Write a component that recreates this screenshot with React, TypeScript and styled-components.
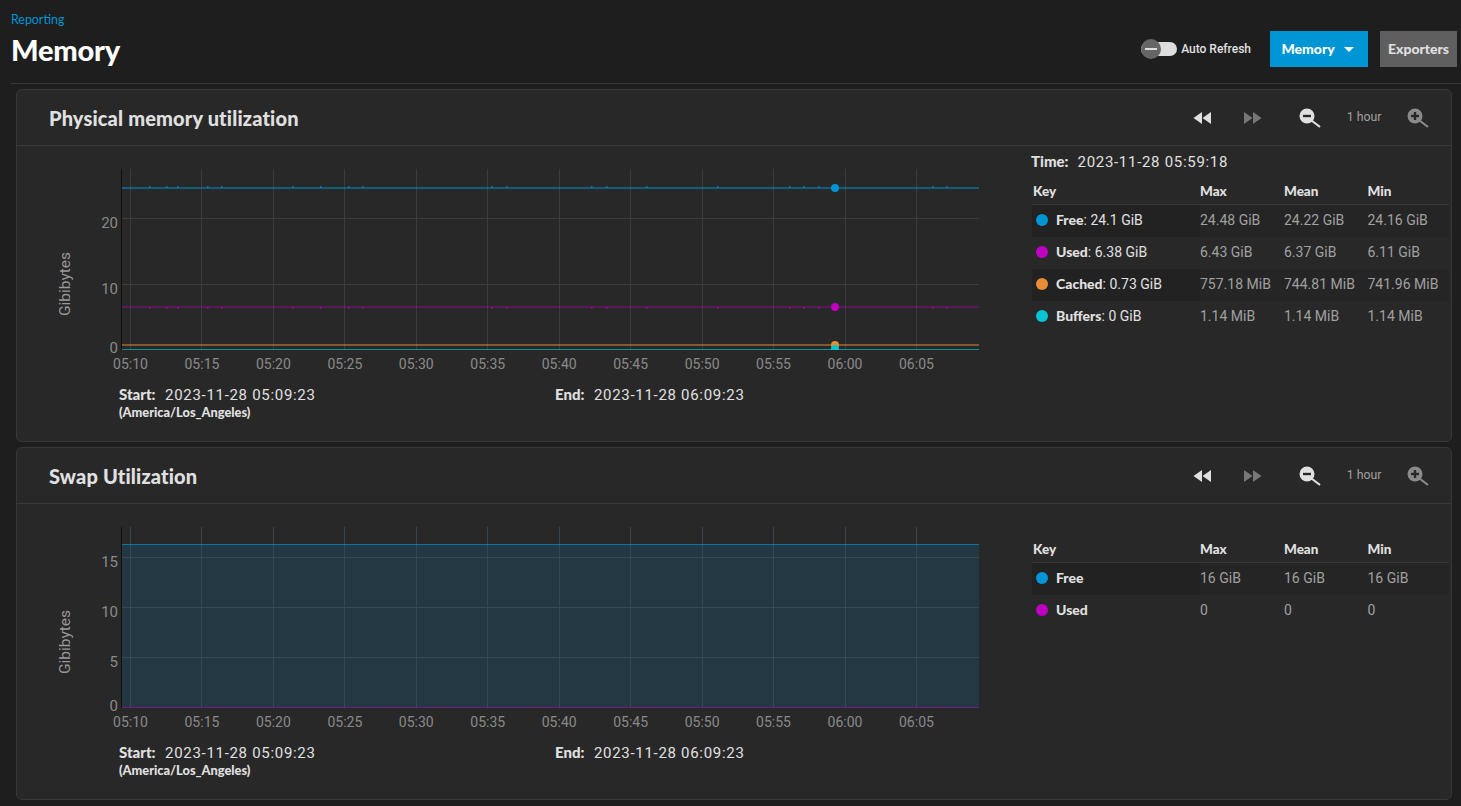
import React from 'react';
import styled, { createGlobalStyle } from 'styled-components';

const Color = {
  PAGE: '#1e1e1e',
  CARD: '#282828',
  LINE: '#383838',
  TEXT: '#e0e0e0',
  MUTED: '#a0a0a0',
  BLUE: '#0095d5',
  PURPLE: '#c000c0',
  ORANGE: '#e68d36',
  CYAN: '#07c4d2',
};

const HEAD = `Lato, "Noto Sans", sans-serif`;
const BODY = `Roboto, "Liberation Sans", sans-serif`;

const GlobalStyle = createGlobalStyle`
  html, body { margin: 0; padding: 0; background: ${Color.PAGE}; }
  body { width: 1461px; height: 806px; overflow: hidden; font-family: ${BODY}; color: ${Color.TEXT}; }
`;

const Page = styled.div`
  padding: 0 4px 0 11px;
`;

const PageHeader = styled.header`
  height: 83px;
  border-bottom: 1px solid #353535;
  display: flex;
  justify-content: space-between;
  align-items: flex-start;
  margin-right: -4px;
`;

const TitleBlock = styled.div`
  padding-top: 13px;
`;

const Crumb = styled.div`
  font: 400 12.4px/14px ${HEAD};
  color: ${Color.BLUE};
`;

const Title = styled.h1`
  margin: 5px 0 0;
  font: 900 29px/36px ${HEAD};
  color: #fff;
  letter-spacing: -0.2px;
`;

const Actions = styled.div`
  display: flex;
  align-items: center;
  padding-top: 31px;
  margin-right: 4px;
`;

const Toggle = styled.div`
  position: relative;
  width: 36px;
  height: 14px;
  border-radius: 7px;
  background: #dddddd;
  margin-right: 4px;
`;

const Thumb = styled.span`
  position: absolute;
  left: 0;
  top: -3px;
  width: 20px;
  height: 20px;
  border-radius: 50%;
  background: #666;
  display: flex;
  align-items: center;
  justify-content: center;
  &::after {
    content: '';
    width: 12px;
    height: 2px;
    background: #ddd;
  }
`;

const ToggleLabel = styled.span`
  font: 500 12px/14px ${BODY};
  color: ${Color.TEXT};
  margin-right: 19px;
`;

const HeadButton = styled.div<{ $primary?: boolean }>`
  height: 36px;
  padding: 0 8px;
  display: flex;
  align-items: center;
  justify-content: center;
  width: ${(p) => (p.$primary ? 98 : 77)}px;
  box-sizing: border-box;
  margin-left: ${(p) => (p.$primary ? 0 : 12)}px;
  background: ${(p) => (p.$primary ? Color.BLUE : '#5f5f5f')};
  color: ${(p) => (p.$primary ? '#fff' : Color.TEXT)};
  font: 900 14px/16px ${HEAD};
`;

const Caret = styled.span`
  width: 0;
  height: 0;
  margin: 0 3px 0 9px;
  border-left: 5.5px solid transparent;
  border-right: 5.5px solid transparent;
  border-top: 5.5px solid #fff;
`;

const Cards = styled.div`
  display: flex;
  flex-direction: column;
  gap: 5px;
  padding: 5px 5px 0 5px;
`;

const Card = styled.section`
  height: 351px;
  background: ${Color.CARD};
  border: 1px solid ${Color.LINE};
  border-radius: 6px;
`;

const CardHead = styled.div`
  height: 55px;
  border-bottom: 1px solid ${Color.LINE};
  display: flex;
  align-items: center;
  padding: 0 21px 0 32px;
`;

const CardTitle = styled.h2`
  flex: 1;
  margin: 0;
  font: 900 20px/24px ${HEAD};
  letter-spacing: 0.15px;
  color: ${Color.TEXT};
`;

const Tools = styled.div`
  display: flex;
  align-items: center;
`;

const ToolIcon = styled.svg<{ $gap?: number }>`
  width: 24px;
  height: 24px;
  display: block;
  flex: none;
  margin-left: ${(p) => p.$gap ?? 0}px;
`;

const Hour = styled.span`
  font: 400 12.3px/14px ${BODY};
  color: ${Color.MUTED};
  margin: 0 24.5px 2px 25px;
`;

const CardBody = styled.div`
  display: flex;
  height: 295px;
`;

const ChartCol = styled.div`
  width: 1014px;
  flex: none;
`;

const ChartSvg = styled.svg`
  display: block;
  width: 1014px;
  height: 233px;
  font-family: ${BODY};
`;

const Stamps = styled.div`
  display: flex;
  padding-left: 102px;
  margin-top: 7px;
`;

const Stamp = styled.div<{ $wide?: boolean }>`
  width: ${(p) => (p.$wide ? 436 : 300)}px;
  font: 400 15px/16px ${BODY};
  color: ${Color.TEXT};
  letter-spacing: 0.7px;
  b {
    font: 900 15px/16px ${HEAD};
    letter-spacing: 0;
    margin-right: 9.5px;
  }
`;

const Zone = styled.div`
  margin-top: 2px;
  font: 900 12.8px/14px ${HEAD};
  color: ${Color.TEXT};
  letter-spacing: 0;
`;

const LegendCol = styled.div`
  flex: 1;
  padding: 0 2px 0 1px;
`;

const TimeRow = styled.div<{ $hidden?: boolean }>`
  height: 31px;
  padding-top: 7px;
  margin-left: -1px;
  box-sizing: border-box;
  visibility: ${(p) => (p.$hidden ? 'hidden' : 'visible')};
  font: 400 15px/16px ${BODY};
  letter-spacing: 0.7px;
  b {
    font: 900 15px/16px ${HEAD};
    letter-spacing: 0;
    margin-right: 9px;
  }
`;

const LegendGrid = styled.div`
  display: grid;
  grid-template-columns: 168px 84px 83.5px 1fr;
`;

const HeadCell = styled.div`
  height: 27px;
  border-bottom: 1px solid ${Color.LINE};
  font: 900 13.5px/29px ${HEAD};
  color: ${Color.TEXT};
`;

const KeyHead = styled(HeadCell)`
  padding-left: 1px;
`;

const Cell = styled.div<{ $shade?: boolean }>`
  height: 32px;
  box-sizing: border-box;
  padding-bottom: 2px;
  display: flex;
  align-items: center;
  background: ${(p) => (p.$shade ? '#252525' : 'transparent')};
  font: 400 14px/16px ${BODY};
  color: ${Color.MUTED};
  white-space: nowrap;
`;

const KeyCell = styled(Cell)`
  padding-left: 4px;
  background: ${(p) => (p.$shade ? '#222222' : 'transparent')};
  color: ${Color.TEXT};
  b {
    font: 900 14px/16px ${HEAD};
  }
`;

const Dot = styled.span<{ $color: string }>`
  width: 12px;
  height: 12px;
  border-radius: 50%;
  background: ${(p) => p.$color};
  margin-right: 8px;
`;

const RewindIcon = ({ dim }: { dim?: boolean }) => (
  <ToolIcon viewBox="0 0 24 24" fill={dim ? '#777' : '#e0e0e0'}>
    <path d="M11 18V6l-8.5 6 8.5 6zm.5-6l8.5 6V6l-8.5 6z" />
  </ToolIcon>
);

const ForwardIcon = ({ dim, gap }: { dim?: boolean; gap?: number }) => (
  <ToolIcon viewBox="0 0 24 24" fill={dim ? '#777' : '#e0e0e0'} $gap={gap}>
    <path d="M4 18l8.5-6L4 6v12zm9-12v12l8.5-6L13 6z" />
  </ToolIcon>
);

const ZoomIcon = ({ plus, color, gap }: { plus?: boolean; color: string; gap?: number }) => (
  <ToolIcon viewBox="0 0 24 24" $gap={gap}>
    <circle cx="9" cy="10" r="7.5" fill={color} />
    <path d="M13.5 14.5L22 21" stroke={color} strokeWidth="2.2" />
    <path d="M5 10h8" stroke={Color.CARD} strokeWidth="2.4" />
    {plus && <path d="M9 6v8" stroke={Color.CARD} strokeWidth="2.4" />}
  </ToolIcon>
);

type Series = { color: string; y: number; w?: number; opacity?: number };

const xGrid = Array.from({ length: 12 }, (_, i) => 113.5 + i * 71.45);
const xLabels = ['05:10', '05:15', '05:20', '05:25', '05:30', '05:35', '05:40', '05:45', '05:50', '05:55', '06:00', '06:05'];
const bumps = [28, 45, 56, 86, 100, 171, 199, 227, 241, 370, 385, 470, 485, 525, 596, 668, 682, 697, 811, 825];

type ChartProps = {
  ticks: { label: string; y: number }[];
  bottom: number;
  series: Series[];
  dots?: { color: string; y: number }[];
  area?: number;
  wobble?: boolean;
};

// coordinates are relative to the card body: plot runs x 104..962
const Chart = ({ ticks, bottom, series, dots, area, wobble }: ChartProps) => {
  const grid = area !== undefined ? '#344955' : '#3c3c3c';
  return (
    <ChartSvg viewBox="0 0 1014 233">
      <defs>
        <clipPath id="plot-clip">
          <rect x={104} y={23} width={858} height={bottom - 23} />
        </clipPath>
      </defs>
      {area !== undefined && <rect x={104} y={area} width={858} height={bottom - area} fill="#243843" />}
      {xGrid.map((x) => (
        <line key={x} x1={Math.floor(x) + 0.5} x2={Math.floor(x) + 0.5} y1={23} y2={bottom} stroke={grid} />
      ))}
      {ticks.map((t) => (
        <g key={t.label}>
          {t.label !== '0' && <line x1={104} x2={962} y1={t.y + 0.5} y2={t.y + 0.5} stroke={grid} />}
          <text x={101} y={t.y + 10} textAnchor="end" fontSize="15" fill="#8a8a8a">
            {t.label}
          </text>
        </g>
      ))}
      {series.map((s) => (
        <g key={s.color}>
          <line x1={104} x2={962} y1={s.y} y2={s.y} stroke={s.color} strokeWidth={s.w ?? 1} opacity={s.opacity ?? 0.65} />
          {wobble &&
            s.y < 170 &&
            bumps.map((b) => (
              <rect key={b} x={104 + b} y={s.y < 60 ? s.y - 2 : s.y} width={1.5} height={2} fill={s.color} opacity={0.65} />
            ))}
        </g>
      ))}
      <line x1={104.5} x2={104.5} y1={23} y2={bottom} stroke="#111" />
      <g clipPath="url(#plot-clip)">
        {dots?.map((d) => <circle key={d.color} cx={818} cy={d.y} r={4} fill={d.color} />)}
      </g>
      {xLabels.map((l, i) => (
        <text key={l} x={xGrid[i]} y={bottom + 19} textAnchor="middle" fontSize="14" fill="#8a8a8a">
          {l}
        </text>
      ))}
      <text transform={`translate(53 ${bottom - 66}) rotate(-90)`} textAnchor="middle" fontSize="15.5" fill="#999">
        Gibibytes
      </text>
    </ChartSvg>
  );
};

type Row = { name: string; now?: string; color: string; max: string; mean: string; min: string };

const memoryRows: Row[] = [
  { name: 'Free', now: '24.1 GiB', color: Color.BLUE, max: '24.48 GiB', mean: '24.22 GiB', min: '24.16 GiB' },
  { name: 'Used', now: '6.38 GiB', color: Color.PURPLE, max: '6.43 GiB', mean: '6.37 GiB', min: '6.11 GiB' },
  { name: 'Cached', now: '0.73 GiB', color: Color.ORANGE, max: '757.18 MiB', mean: '744.81 MiB', min: '741.96 MiB' },
  { name: 'Buffers', now: '0 GiB', color: Color.CYAN, max: '1.14 MiB', mean: '1.14 MiB', min: '1.14 MiB' },
];

const swapRows: Row[] = [
  { name: 'Free', color: Color.BLUE, max: '16 GiB', mean: '16 GiB', min: '16 GiB' },
  { name: 'Used', color: Color.PURPLE, max: '0', mean: '0', min: '0' },
];

const Legend = ({ rows, time }: { rows: Row[]; time?: string }) => (
  <LegendCol>
    <TimeRow $hidden={!time}>
      <b>Time:</b>
      {time ?? '-'}
    </TimeRow>
    <LegendGrid>
      <KeyHead>Key</KeyHead>
      <HeadCell>Max</HeadCell>
      <HeadCell>Mean</HeadCell>
      <HeadCell>Min</HeadCell>
      {rows.map((r, i) => (
        <React.Fragment key={r.name}>
          <KeyCell $shade={i % 2 === 0}>
            <Dot $color={r.color} />
            <b>{r.name}</b>
            {r.now && <>: {r.now}</>}
          </KeyCell>
          <Cell $shade={i % 2 === 0}>{r.max}</Cell>
          <Cell $shade={i % 2 === 0}>{r.mean}</Cell>
          <Cell $shade={i % 2 === 0}>{r.min}</Cell>
        </React.Fragment>
      ))}
    </LegendGrid>
  </LegendCol>
);

const ReportCard = ({ title, children }: { title: string; children: React.ReactNode }) => (
  <Card>
    <CardHead>
      <CardTitle>{title}</CardTitle>
      <Tools>
        <RewindIcon />
        <ForwardIcon dim gap={25.5} />
        <ZoomIcon color="#e0e0e0" gap={33.5} />
        <Hour>1 hour</Hour>
        <ZoomIcon plus color="#8a8a8a" />
      </Tools>
    </CardHead>
    <CardBody>{children}</CardBody>
  </Card>
);

const TimeRange = () => (
  <Stamps>
    <Stamp $wide>
      <b>Start:</b>2023-11-28 05:09:23
      <Zone>(America/Los_Angeles)</Zone>
    </Stamp>
    <Stamp>
      <b>End:</b>2023-11-28 06:09:23
    </Stamp>
  </Stamps>
);

export default function App() {
  return (
    <>
      <GlobalStyle />
      <Page>
        <PageHeader>
          <TitleBlock>
            <Crumb>Reporting</Crumb>
            <Title>Memory</Title>
          </TitleBlock>
          <Actions>
            <Toggle>
              <Thumb />
            </Toggle>
            <ToggleLabel>Auto Refresh</ToggleLabel>
            <HeadButton $primary>
              Memory
              <Caret />
            </HeadButton>
            <HeadButton>Exporters</HeadButton>
          </Actions>
        </PageHeader>
        <Cards>
          <ReportCard title="Physical memory utilization">
            <ChartCol>
              <Chart
                wobble
                bottom={204}
                ticks={[
                  { label: '20', y: 72 },
                  { label: '10', y: 138 },
                  { label: '0', y: 197 },
                ]}
                series={[
                  { color: Color.BLUE, y: 42, w: 1.4 },
                  { color: Color.PURPLE, y: 161 },
                  { color: Color.ORANGE, y: 199, w: 1.6 },
                  { color: Color.CYAN, y: 203.5 },
                ]}
                dots={[
                  { color: Color.BLUE, y: 42 },
                  { color: Color.PURPLE, y: 161 },
                  { color: Color.ORANGE, y: 199 },
                  { color: Color.CYAN, y: 203 },
                ]}
              />
              <TimeRange />
            </ChartCol>
            <Legend rows={memoryRows} time="2023-11-28 05:59:18" />
          </ReportCard>
          <ReportCard title="Swap Utilization">
            <ChartCol>
              <Chart
                bottom={204}
                area={40}
                ticks={[
                  { label: '15', y: 53 },
                  { label: '10', y: 103 },
                  { label: '5', y: 153 },
                  { label: '0', y: 197 },
                ]}
                series={[
                  { color: Color.BLUE, y: 40.5, w: 1.2, opacity: 0.65 },
                  { color: Color.PURPLE, y: 203.5, opacity: 0.5 },
                ]}
              />
              <TimeRange />
            </ChartCol>
            <Legend rows={swapRows} />
          </ReportCard>
        </Cards>
      </Page>
    </>
  );
}
